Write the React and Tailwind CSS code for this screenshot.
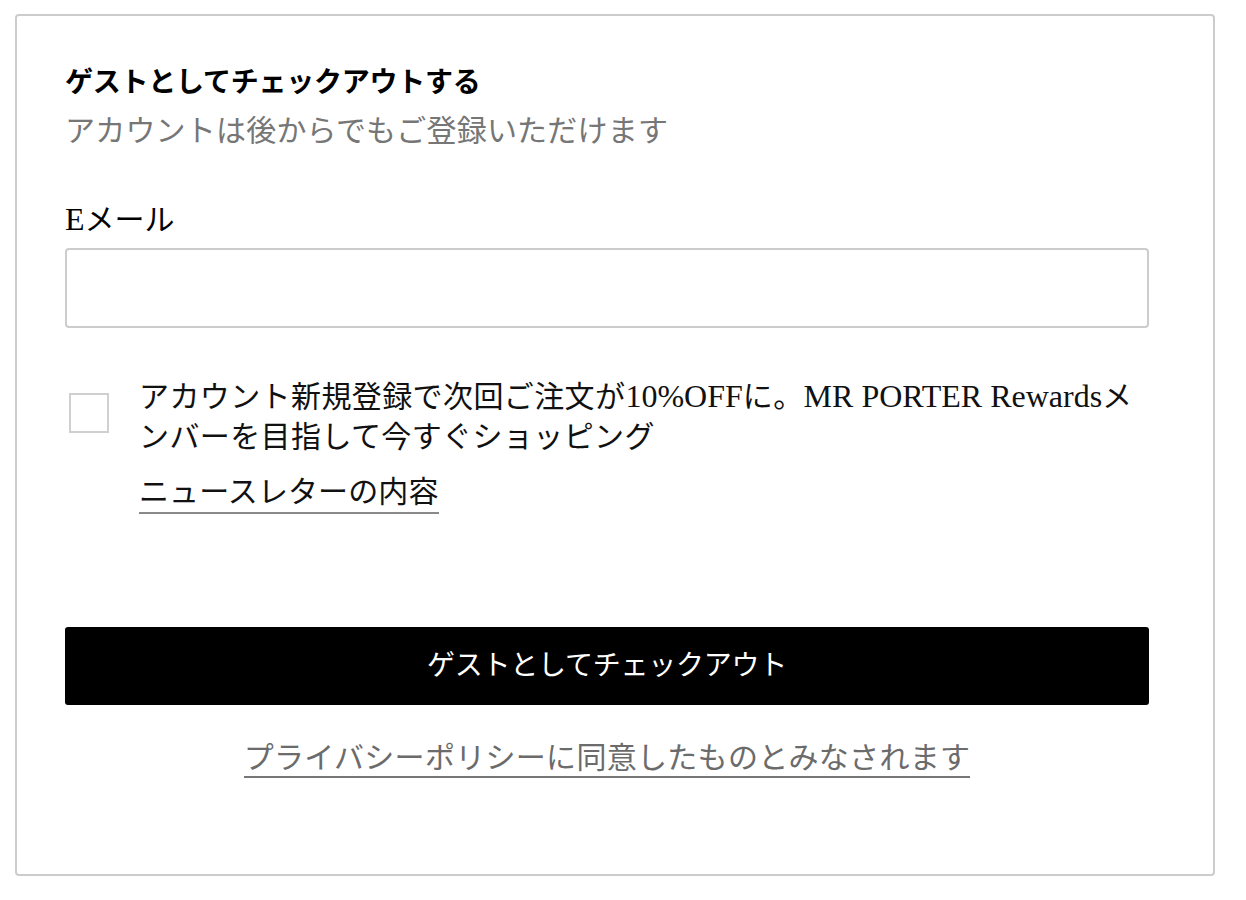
import React, { useState } from 'react';

const GuestCheckout = () => {
  const [email, setEmail] = useState('');
  const [optIn, setOptIn] = useState(false);

  return (
    <div className="min-h-screen bg-white pl-[15px] pt-[14px] font-['Liberation_Serif','Noto_Sans_CJK_JP',serif] text-[#222]">
      <div className="w-[1200px] h-[862px] rounded-[4px] border-2 border-[#cccccc] pl-[48px] pr-[64px] pt-[47px] pb-[98px]">
        {/* heading */}
        <h2 className="text-[28px] leading-[40px] font-bold tracking-[-0.25px] text-black">
          ゲストとしてチェックアウトする
        </h2>
        <p className="mt-[8px] text-[30px] leading-[40px] tracking-[0.2px] text-[#767676]">
          アカウントは後からでもご登録いただけます
        </p>

        {/* email field */}
        <label htmlFor="guest-email" className="block mt-[48px] text-[30px] leading-[40px] text-black">
          <span className="text-[32px]">E</span>メール
        </label>
        <input
          id="guest-email"
          type="email"
          value={email}
          onChange={(e) => setEmail(e.target.value)}
          className="mt-[8px] block w-full h-[80px] rounded-[4px] border-2 border-[#cccccc] px-4 text-[30px] outline-none"
        />

        {/* rewards opt-in */}
        <div className="mt-[48px] flex items-start">
          <button
            type="button"
            onClick={() => setOptIn(!optIn)}
            className={`mt-[17px] ml-[4px] w-[40px] h-[40px] shrink-0 border-2 ${optIn ? 'border-black bg-black' : 'border-[#d0d0d0] bg-white'}`}
            aria-pressed={optIn}
          ></button>
          <div className="ml-[30px] flex-1">
            <p className="text-[30px] leading-[40px] tracking-[0.4px] text-[#111]">
              アカウント新規登録で次回ご注文が<span className="text-[32px] leading-[40px] tracking-normal">10%OFF</span>に。<span className="text-[32px] leading-[40px] tracking-normal">MR PORTER Rewards</span>メンバーを目指して今すぐショッピング
            </p>
            <a href="#" className="mt-[15px] inline-block text-[30px] leading-[40px] tracking-[0.1px] text-[#111] border-b-2 border-[#8a8a8a]">
              ニュースレターの内容
            </a>
          </div>
        </div>

        {/* submit */}
        <button
          type="button"
          className="mt-[113px] w-full h-[78px] rounded-[3px] bg-black text-white text-[28px] tracking-[-0.25px]"
        >
          ゲストとしてチェックアウト
        </button>

        <div className="mt-[35px] text-center">
          <a href="#" className="inline-block text-[30px] leading-[36px] tracking-[0.3px] text-[#6b6b6b] border-b-2 border-[#777777]">
            プライバシーポリシーに同意したものとみなされます
          </a>
        </div>
      </div>
    </div>
  );
};

export default function App() {
  return <GuestCheckout />;
}
